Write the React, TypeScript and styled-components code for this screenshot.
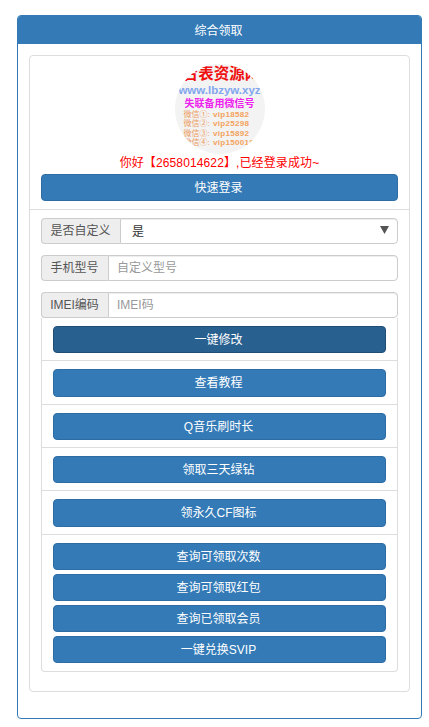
import React from "react";
import styled, { createGlobalStyle } from "styled-components";

const Global = createGlobalStyle`
  html, body { margin: 0; padding: 0; background: #fff; }
  * { box-sizing: border-box; }
  body { font-family: "Liberation Sans", "Noto Sans CJK SC", sans-serif; font-size: 12px; color: #333; }
`;

const Panel = styled.section`
  margin: 15px 7px 8px 17px;
  height: 704px;
  border: 1px solid #337ab7;
  border-radius: 4px;
  background: #fff;
  display: flex;
  flex-direction: column;
`;
const PanelHeading = styled.header`
  height: 28px;
  flex: none;
  padding: 0 2px 2px 0;
  background: #337ab7;
  color: #fff;
  display: flex;
  align-items: center;
  justify-content: center;
  border-radius: 3px 3px 0 0;
`;
const PanelBody = styled.div`
  padding: 11px 11px 0;
`;
const Well = styled.div`
  height: 637px;
  border: 1px solid #ddd;
  border-radius: 4px;
`;
const Top = styled.div`
  height: 154px;
  padding: 8px 11px 0;
  border-bottom: 1px solid #ddd;
  display: flex;
  flex-direction: column;
  align-items: center;
`;
const Logo = styled.div`
  width: 90px;
  height: 90px;
  flex: none;
  border-radius: 50%;
  background: #f3f3f3;
  overflow: hidden;
  display: flex;
  flex-direction: column;
  align-items: center;
  white-space: nowrap;
`;
const LogoTitle = styled.div`
  font-size: 15.5px;
  line-height: 18px;
  margin: 1px 0 0 4px;
  font-weight: 700;
  color: #f01010;
`;
const LogoUrl = styled.div`
  font-size: 11.5px;
  line-height: 14px;
  font-weight: 700;
  color: #82a6ee;
`;
const LogoSub = styled.div`
  font-size: 10px;
  line-height: 13px;
  font-weight: 700;
  color: #ee22ee;
`;
const LogoLines = styled.div`
  margin: 0 0 0 9px;
  align-self: flex-start;
`;
const LogoLine = styled.div`
  font-size: 8px;
  line-height: 9.33px;
  font-weight: 700;
  color: #f3a25c;
  display: flex;
`;
const LogoLabel = styled.span`
  width: 29.5px;
  flex: none;
  font-size: 8px;
  font-weight: 400;
  color: #ec9a5c;
`;
const LogoVip = styled.span`
  letter-spacing: .3px;
`;
const Welcome = styled.div`
  color: #f00;
  font-size: 12px;
  line-height: 18px;
  height: 20px;
  letter-spacing: .12px;
  white-space: nowrap;
`;
const Button = styled.button<{ $active?: boolean }>`
  display: block;
  width: 100%;
  height: 27.33px;
  padding: 0 2px 2px 0;
  border: 1px solid ${(p) => (p.$active ? "#204d74" : "#2e6da4")};
  border-radius: 4px;
  background: ${(p) => (p.$active ? "#286090" : "#337ab7")};
  color: #fff;
  font: inherit;
`;
const Form = styled.div`
  padding: 8px 11px 0;
`;
const Group = styled.div`
  display: flex;
  height: 26px;
  margin-bottom: 11px;
`;
const LastGroup = styled(Group)`
  margin-bottom: 0;
`;
const Addon = styled.span<{ $w: number }>`
  flex: none;
  width: ${(p) => p.$w}px;
  padding: 0 1px 3px 0;
  background: #eee;
  border: 1px solid #ccc;
  border-right: 0;
  border-radius: 4px 0 0 4px;
  display: flex;
  align-items: center;
  justify-content: center;
  color: #555;
`;
const Input = styled.input`
  flex: 1;
  min-width: 0;
  border: 1px solid #ccc;
  border-radius: 0 4px 4px 0;
  padding: 0 8px;
  font: inherit;
  color: #555;
  box-shadow: inset 0 1px 1px rgba(0,0,0,.075);
  &::placeholder { color: #999; opacity: 1; }
`;
const SelectWrap = styled.div`
  flex: 1;
  min-width: 0;
  position: relative;
`;
const Select = styled.select`
  width: 100%;
  height: 100%;
  appearance: none;
  border: 1px solid #ccc;
  border-radius: 0 4px 4px 0;
  background: #fff;
  padding: 2px 11px 0;
  font: inherit;
  color: #333;
  box-shadow: inset 0 1px 1px rgba(0,0,0,.075);
`;
const Arrow = styled.svg`
  position: absolute;
  right: 9px;
  top: 7px;
  width: 9px;
  height: 9px;
  pointer-events: none;
`;
const List = styled.div`
  border: 1px solid #ddd;
  border-top: 0;
  border-radius: 0 0 4px 4px;
  padding-bottom: 8px;
`;
const Item = styled.div`
  padding: 8px 11px 7px;
  border-bottom: 1px solid #ddd;
`;
const LastItem = styled.div`
  padding: 8px 11px 0;
`;
const Stack = styled.div`
  display: flex;
  flex-direction: column;
  gap: 3.67px;
`;

export default function App() {
  return (
    <>
      <Global />
      <Panel>
        <PanelHeading>综合领取</PanelHeading>
        <PanelBody>
          <Well>
            <Top>
              <Logo>
                <LogoTitle>台表资源网</LogoTitle>
                <LogoUrl>www.lbzyw.xyz</LogoUrl>
                <LogoSub>失联备用微信号</LogoSub>
                <LogoLines>
                  <LogoLine><LogoLabel>微信①:</LogoLabel><LogoVip>vip18582</LogoVip></LogoLine>
                  <LogoLine><LogoLabel>微信②:</LogoLabel><LogoVip>vip25298</LogoVip></LogoLine>
                  <LogoLine><LogoLabel>微信③:</LogoLabel><LogoVip>vip15892</LogoVip></LogoLine>
                  <LogoLine><LogoLabel>微信④:</LogoLabel><LogoVip>vip150018</LogoVip></LogoLine>
                </LogoLines>
              </Logo>
              <Welcome>你好【2658014622】,已经登录成功~</Welcome>
              <Button>快速登录</Button>
            </Top>
            <Form>
              <Group>
                <Addon $w={79}>是否自定义</Addon>
                <SelectWrap>
                  <Select defaultValue="是">
                    <option>是</option>
                    <option>否</option>
                  </Select>
                  <Arrow viewBox="0 0 9 9"><path d="M0 1h9L4.5 9z" fill="#555" /></Arrow>
                </SelectWrap>
              </Group>
              <Group>
                <Addon $w={67}>手机型号</Addon>
                <Input placeholder="自定义型号" />
              </Group>
              <LastGroup>
                <Addon $w={67}>IMEI编码</Addon>
                <Input placeholder="IMEI码" />
              </LastGroup>
              <List>
                <Item><Button $active>一键修改</Button></Item>
                <Item><Button>查看教程</Button></Item>
                <Item><Button>Q音乐刷时长</Button></Item>
                <Item><Button>领取三天绿钻</Button></Item>
                <Item><Button>领永久CF图标</Button></Item>
                <LastItem>
                  <Stack>
                    <Button>查询可领取次数</Button>
                    <Button>查询可领取红包</Button>
                    <Button>查询已领取会员</Button>
                    <Button>一键兑换SVIP</Button>
                  </Stack>
                </LastItem>
              </List>
            </Form>
          </Well>
        </PanelBody>
      </Panel>
    </>
  );
}
